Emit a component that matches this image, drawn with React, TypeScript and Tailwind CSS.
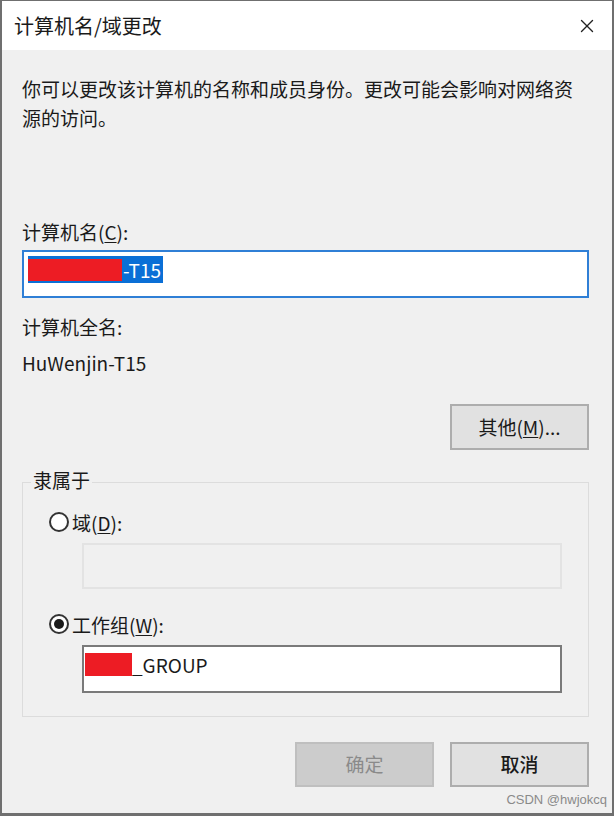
import { X } from "lucide-react";

const font = { fontFamily: '"Noto Sans CJK SC", "Noto Sans", sans-serif' };

function Radio({ checked }: { checked?: boolean }) {
  return (
    <span className="w-[20px] h-[20px] rounded-full border-2 border-[#333] bg-white flex items-center justify-center shrink-0">
      {checked && <span className="w-[10px] h-[10px] rounded-full bg-[#1a1a1a]" />}
    </span>
  );
}

export default function App() {
  return (
    <div
      className="w-[614px] h-[816px] bg-[#f0f0f0] border-x-2 border-b-[3px] border-t border-[#6f6f6f] flex flex-col text-[#1a1a1a] text-[19px] overflow-hidden"
      style={font}
    >
      {/* title bar */}
      <div className="h-[49px] bg-white flex items-center justify-between pl-[12px] pr-[14px] shrink-0">
        <span className="text-[20px] leading-none">计算机名/域更改</span>
        <X className="w-[22px] h-[22px] text-[#222]" strokeWidth={1.5} />
      </div>

      <div className="flex flex-col pl-[20px] pr-[23px]">
        <p className="mt-[24px] leading-[29px] pr-[6px]">
          你可以更改该计算机的名称和成员身份。更改可能会影响对网络资源的访问。
        </p>

        <div className="mt-[90px] leading-none">
          计算机名(<span className="underline underline-offset-2">C</span>):
        </div>
        <div className="mt-[9px] h-[48px] border-2 border-[#2f7fd6] bg-white flex items-start pt-[4px] px-[4px] shrink-0">
          <span className="bg-[#0a6fd6] text-white flex items-center h-[27px] leading-none pr-[2px]">
            <span className="w-[94px] h-[22px] bg-[#ed1c24] mr-[1px]" />
            <span>-T15</span>
          </span>
        </div>

        <div className="mt-[19px] leading-none">计算机全名:</div>
        <div className="mt-[17px] leading-none">HuWenjin-T15</div>

        <div className="mt-[32px] flex justify-end">
          <button className="w-[139px] h-[46px] bg-[#e1e1e1] border-2 border-[#adadad]">
            其他(<span className="underline underline-offset-2">M</span>)...
          </button>
        </div>

        {/* group box */}
        <div className="relative mt-[32px] h-[235px] border border-[#dcdcdc] pl-[26px] pr-[26px] pt-[29px] shrink-0">
          <span className="absolute -top-[13px] left-[8px] bg-[#f0f0f0] px-[2px] leading-none">隶属于</span>
          <div className="flex items-center gap-[3px] leading-none">
            <Radio />
            <span>域(<span className="underline underline-offset-2">D</span>):</span>
          </div>
          <div className="ml-[33px] mt-[11px] h-[46px] border-2 border-[#e3e3e3] bg-[#f0f0f0]" />
          <div className="mt-[25px] flex items-center gap-[3px] leading-none">
            <Radio checked />
            <span>工作组(<span className="underline underline-offset-2">W</span>):</span>
          </div>
          <div className="ml-[33px] mt-[11px] h-[48px] border-2 border-[#7a7a7a] bg-white flex items-start pt-[3px] px-[1px]">
            <span className="flex items-end h-[26px] leading-none">
              <span className="w-[47px] h-[23px] bg-[#ed1c24]" />
              <span className="pb-[2px]">_GROUP</span>
            </span>
          </div>
        </div>

        <div className="mt-[25px] flex justify-end gap-[16px]">
          <button className="w-[139px] h-[45px] bg-[#cccccc] border-2 border-[#bfbfbf] text-[#8a8a8a]">确定</button>
          <button className="w-[139px] h-[45px] bg-[#e1e1e1] border-2 border-[#adadad] font-medium">取消</button>
        </div>
        <div
          className="mt-[6px] self-end -mr-[18px] text-[13px] text-[#8a8a8a] leading-none"
          style={{ fontFamily: '"Liberation Sans", Arial, sans-serif' }}
        >
          CSDN @hwjokcq
        </div>
      </div>
    </div>
  );
}
